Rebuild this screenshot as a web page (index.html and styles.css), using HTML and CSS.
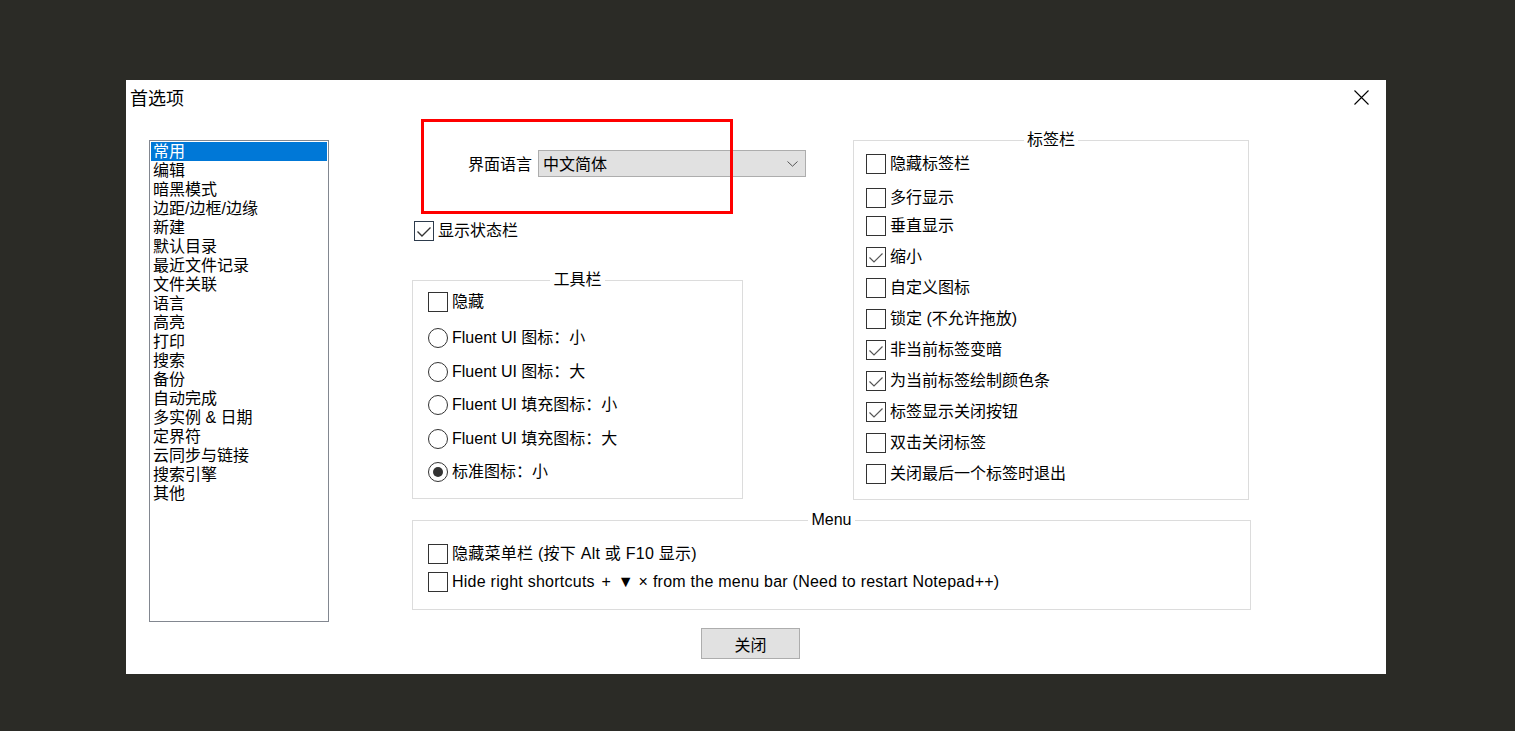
FILE: index.html
```html
<!DOCTYPE html>
<html lang="zh-CN">
<head>
<meta charset="utf-8">
<title>首选项</title>
<link rel="stylesheet" href="styles.css">
</head>
<body>
<div class="dialog">
  <div class="titlebar">
    <span class="title">首选项</span>
    <svg class="close" width="15" height="15" viewBox="0 0 15 15"><path d="M0.5 0.5 L14.5 14.5 M14.5 0.5 L0.5 14.5" stroke="#000" stroke-width="1.1" fill="none"/></svg>
  </div>
  <div class="content">
    <ul class="listbox">
      <li class="selected">常用</li>
      <li>编辑</li>
      <li>暗黑模式</li>
      <li>边距/边框/边缘</li>
      <li>新建</li>
      <li>默认目录</li>
      <li>最近文件记录</li>
      <li>文件关联</li>
      <li>语言</li>
      <li>高亮</li>
      <li>打印</li>
      <li>搜索</li>
      <li>备份</li>
      <li>自动完成</li>
      <li>多实例 &amp; 日期</li>
      <li>定界符</li>
      <li>云同步与链接</li>
      <li>搜索引擎</li>
      <li>其他</li>
    </ul>
    <div class="main">
      <div class="top-row">
        <div class="left-col">
          <div class="lang-row">
            <span class="lang-label">界面语言</span>
            <div class="combo">
              <span class="combo-text">中文简体</span>
              <svg class="chevron" width="11" height="6" viewBox="0 0 11 6"><path d="M0.5 0.5 L5.5 5.2 L10.5 0.5" stroke="#555" stroke-width="1" fill="none"/></svg>
            </div>
          </div>
          <div class="check status">
            <span class="box focus"><svg width="18" height="18" viewBox="0 0 18 18"><path d="M2.5 9.5 L7 14 L15.5 5.5" stroke="#333" stroke-width="1.4" fill="none"/></svg></span>
            <span>显示状态栏</span>
          </div>
          <div class="group toolbar">
            <div class="group-title"><span>工具栏</span></div>
            <div class="items toolbar-items">
              <div class="check"><span class="box"></span><span>隐藏</span></div>
              <div class="check radio-row first-radio"><span class="radio"></span><span>Fluent UI 图标：小</span></div>
              <div class="check radio-row"><span class="radio"></span><span>Fluent UI 图标：大</span></div>
              <div class="check radio-row"><span class="radio"></span><span>Fluent UI 填充图标：小</span></div>
              <div class="check radio-row"><span class="radio"></span><span>Fluent UI 填充图标：大</span></div>
              <div class="check radio-row"><span class="radio on"></span><span>标准图标：小</span></div>
            </div>
          </div>
        </div>
        <div class="group tabbar">
          <div class="group-title"><span>标签栏</span></div>
          <div class="items tab-items">
            <div class="check tab-first"><span class="box"></span><span>隐藏标签栏</span></div>
            <div class="check tab-second"><span class="box"></span><span>多行显示</span></div>
            <div class="check"><span class="box"></span><span>垂直显示</span></div>
            <div class="check"><span class="box"><svg width="18" height="18" viewBox="0 0 18 18"><path d="M2.5 9.5 L7 14 L15.5 5.5" stroke="#555" stroke-width="1.2" fill="none"/></svg></span><span>缩小</span></div>
            <div class="check"><span class="box"></span><span>自定义图标</span></div>
            <div class="check"><span class="box"></span><span>锁定 (不允许拖放)</span></div>
            <div class="check"><span class="box"><svg width="18" height="18" viewBox="0 0 18 18"><path d="M2.5 9.5 L7 14 L15.5 5.5" stroke="#555" stroke-width="1.2" fill="none"/></svg></span><span>非当前标签变暗</span></div>
            <div class="check"><span class="box"><svg width="18" height="18" viewBox="0 0 18 18"><path d="M2.5 9.5 L7 14 L15.5 5.5" stroke="#555" stroke-width="1.2" fill="none"/></svg></span><span>为当前标签绘制颜色条</span></div>
            <div class="check"><span class="box"><svg width="18" height="18" viewBox="0 0 18 18"><path d="M2.5 9.5 L7 14 L15.5 5.5" stroke="#555" stroke-width="1.2" fill="none"/></svg></span><span>标签显示关闭按钮</span></div>
            <div class="check"><span class="box"></span><span>双击关闭标签</span></div>
            <div class="check"><span class="box"></span><span>关闭最后一个标签时退出</span></div>
          </div>
        </div>
      </div>
      <div class="group menu">
        <div class="group-title"><span>Menu</span></div>
        <div class="items menu-items">
          <div class="check"><span class="box"></span><span class="wide">隐藏菜单栏 (按下 Alt 或 F10 显示)</span></div>
          <div class="check"><span class="box"></span><span class="wide">Hide right shortcuts <span class="sym">+</span> ▼ × from the menu bar (Need to restart Notepad++)</span></div>
        </div>
      </div>
      <div class="btn-row"><button class="btn">关闭</button></div>
    </div>
  </div>
  <div class="highlight"></div>
</div>
</body>
</html>
```
FILE: styles.css
```css
html, body {
  margin: 0;
  padding: 0;
  background: #2b2b26;
}
body {
  font-family: "Liberation Sans", "Noto Sans CJK SC", sans-serif;
  font-size: 16px;
  line-height: 20px;
  color: #000;
}
.dialog {
  position: relative;
  margin: 80px 0 0 126px;
  width: 1260px;
  height: 594px;
  background: #fff;
  box-sizing: border-box;
  overflow: hidden;
}
.titlebar {
  height: 36px;
  display: flex;
  align-items: center;
  justify-content: space-between;
  padding: 0 17px 0 4px;
}
.title {
  font-family: "Noto Sans CJK SC", sans-serif;
  font-size: 18px;
  line-height: 34px;
  padding-bottom: 2px;
}
.close {
  display: block;
  margin-top: -2px;
}
.content {
  display: flex;
  align-items: flex-start;
  padding: 24px 0 0 23px;
}
.listbox {
  list-style: none;
  margin: 0;
  padding: 1px;
  width: 180px;
  height: 482px;
  box-sizing: border-box;
  border: 1px solid #828790;
  flex-shrink: 0;
}
.listbox li {
  height: 19px;
  line-height: 19px;
  padding-left: 2px;
  white-space: nowrap;
}
.listbox li.selected {
  background: #0078d7;
  color: #fff;
}
.main {
  margin-left: 83px;
  display: flex;
  flex-direction: column;
}
.top-row {
  display: flex;
  align-items: flex-start;
}
.left-col {
  width: 331px;
  flex-shrink: 0;
}
.lang-row {
  display: flex;
  align-items: center;
  margin-top: 10px;
  padding-left: 56px;
  height: 27px;
}
.lang-label {
  width: 64px;
  flex-shrink: 0;
  white-space: nowrap;
  padding-top: 2px;
}
.combo {
  margin-left: 6px;
  width: 268px;
  height: 27px;
  flex-shrink: 0;
  box-sizing: border-box;
  background: #e1e1e1;
  border: 1px solid #adadad;
  display: flex;
  align-items: center;
  justify-content: space-between;
  padding: 0 7px 0 4px;
}
.combo-text {
  padding-top: 2px;
}
.chevron {
  display: block;
}
.check {
  display: flex;
  align-items: center;
  gap: 4px;
  height: 20px;
  white-space: nowrap;
}
.box {
  width: 20px;
  height: 20px;
  box-sizing: border-box;
  border: 1px solid #333;
  background: #fff;
  flex-shrink: 0;
  display: flex;
  align-items: center;
  justify-content: center;
}
.box.focus {
  border-color: #2d3b4c;
}
.box svg {
  display: block;
}
.radio {
  width: 20px;
  height: 20px;
  box-sizing: border-box;
  border: 1px solid #333;
  border-radius: 50%;
  flex-shrink: 0;
  display: flex;
  align-items: center;
  justify-content: center;
}
.radio.on::after {
  content: "";
  width: 10px;
  height: 10px;
  border-radius: 50%;
  background: #333;
}
.status {
  margin-top: 44px;
  margin-left: 2px;
}
.group {
  border: 1px solid #dcdcdc;
  box-sizing: border-box;
  flex-shrink: 0;
}
.group-title {
  display: flex;
  justify-content: center;
  height: 20px;
  margin-top: -11px;
}
.group-title span {
  background: #fff;
  padding: 0 3px;
}
.toolbar {
  margin-top: 39px;
  width: 331px;
  height: 219px;
}
.toolbar-items {
  padding: 2px 0 0 15px;
  display: flex;
  flex-direction: column;
}
.radio-row {
  margin-top: 13.5px;
}
.radio-row.first-radio {
  margin-top: 16px;
}
.tabbar {
  margin-left: 110px;
  width: 396px;
  height: 360px;
}
.tab-items {
  padding: 4px 0 0 12px;
  display: flex;
  flex-direction: column;
  gap: 11px;
}
.tab-first {
  margin-bottom: 3px;
}
.tab-second {
  margin-bottom: -3px;
}
.menu {
  margin-top: 20px;
  width: 839px;
  height: 90px;
}
.menu-items {
  padding: 14px 0 0 15px;
  display: flex;
  flex-direction: column;
  gap: 8px;
}
.wide {
  letter-spacing: 0.25px;
}
.sym {
  padding: 0 2px;
}
.btn-row {
  margin-top: 18px;
  padding-left: 289px;
}
.btn {
  width: 99px;
  height: 31px;
  box-sizing: border-box;
  background: #e1e1e1;
  border: 1px solid #adadad;
  font-family: "Liberation Sans", "Noto Sans CJK SC", sans-serif;
  font-size: 16px;
  color: #000;
  padding: 0;
  border-radius: 0;
}
.highlight {
  position: absolute;
  left: 295px;
  top: 39px;
  width: 312px;
  height: 95px;
  box-sizing: border-box;
  border: 3px solid #ff0000;
  pointer-events: none;
}
```
